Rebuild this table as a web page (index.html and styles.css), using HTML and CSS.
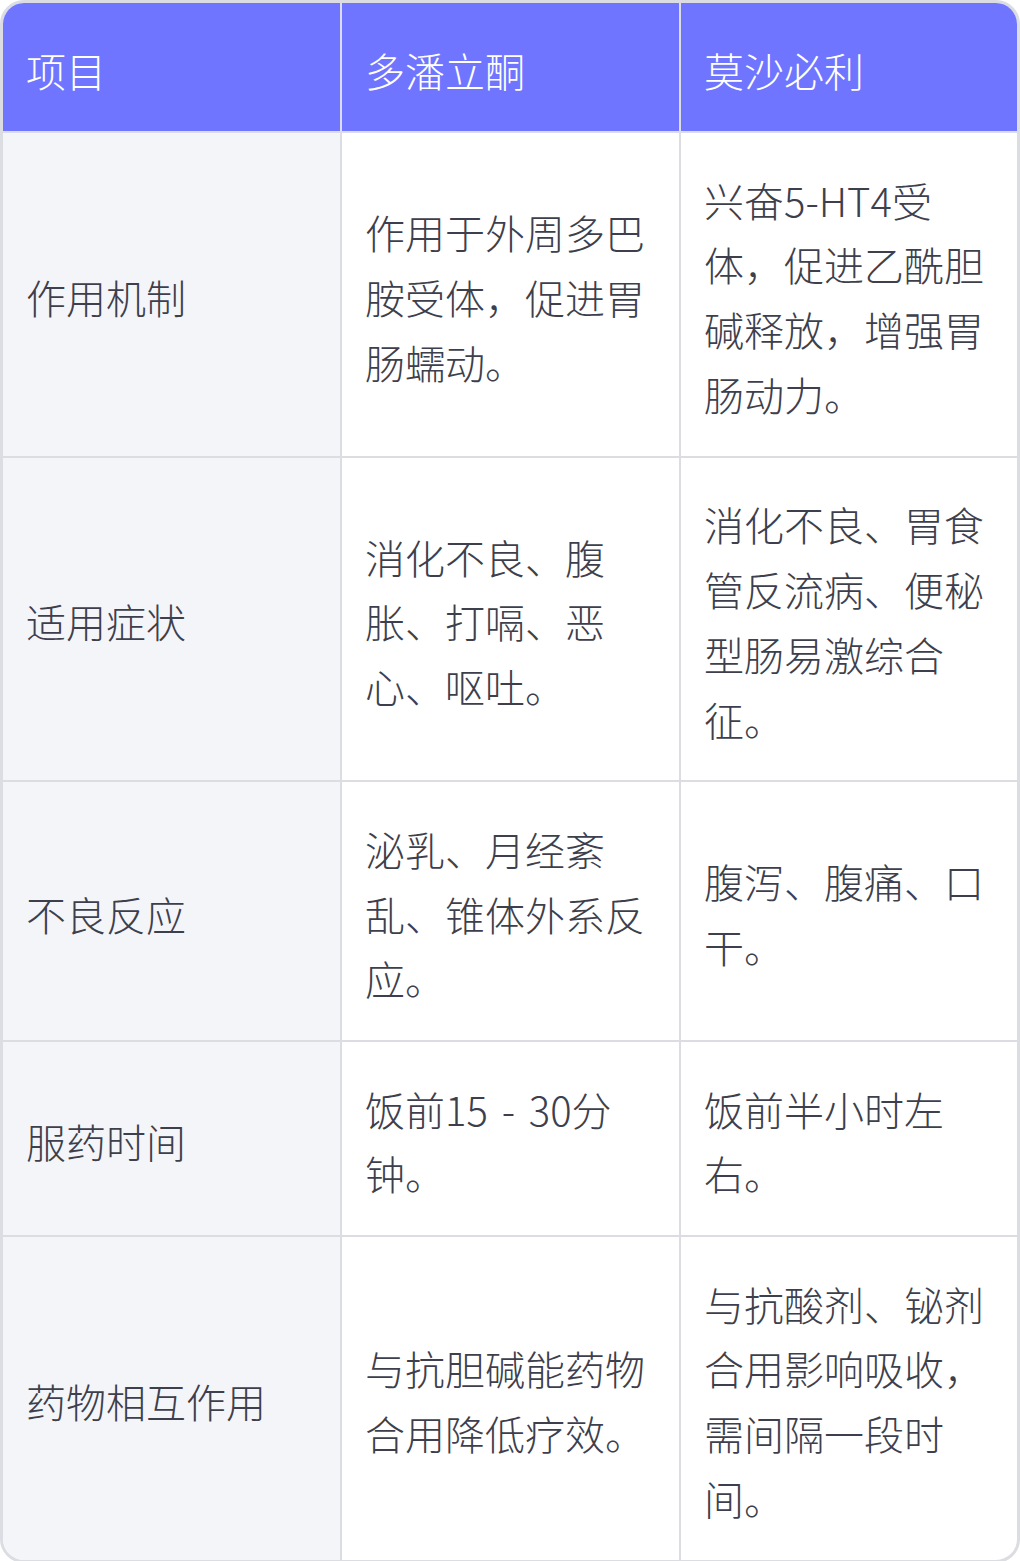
FILE: index.html
```html
<!DOCTYPE html>
<html lang="zh-CN">
<head>
<meta charset="utf-8">
<title>多潘立酮与莫沙必利对比</title>
<link rel="stylesheet" href="styles.css">
</head>
<body>
<div class="wrap">
  <table class="cmp">
    <colgroup>
      <col class="c1">
      <col class="c2">
      <col class="c3">
    </colgroup>
    <thead>
      <tr>
        <th>项目</th>
        <th>多潘立酮</th>
        <th>莫沙必利</th>
      </tr>
    </thead>
    <tbody>
      <tr>
        <td class="label">作用机制</td>
        <td>作用于外周多巴胺受体，促进胃肠蠕动。</td>
        <td>兴奋5-HT4受体，促进乙酰胆碱释放，增强胃肠动力。</td>
      </tr>
      <tr>
        <td class="label">适用症状</td>
        <td>消化不良、腹胀、打嗝、恶心、呕吐。</td>
        <td>消化不良、胃食管反流病、便秘型肠易激综合征。</td>
      </tr>
      <tr>
        <td class="label">不良反应</td>
        <td>泌乳、月经紊乱、锥体外系反应。</td>
        <td>腹泻、腹痛、口干。</td>
      </tr>
      <tr>
        <td class="label">服药时间</td>
        <td>饭前15 - 30分钟。</td>
        <td>饭前半小时左右。</td>
      </tr>
      <tr>
        <td class="label">药物相互作用</td>
        <td>与抗胆碱能药物合用降低疗效。</td>
        <td>与抗酸剂、铋剂合用影响吸收，需间隔一段时间。</td>
      </tr>
    </tbody>
  </table>
</div>
</body>
</html>
```
FILE: styles.css
```css
html, body {
  margin: 0;
  padding: 0;
  background: #ffffff;
}

.wrap {
  width: 1020px;
  box-sizing: border-box;
  border: 3px solid #dcdde2;
  border-radius: 24px;
  overflow: hidden;
  background: #ffffff;
}

.cmp {
  width: 100%;
  table-layout: fixed;
  border-collapse: separate;
  border-spacing: 0;
  font-family: "Noto Sans CJK SC", "Noto Sans", sans-serif;
  font-weight: 300;
  font-size: 40px;
  line-height: 64.8px;
  color: #3d404c;
}

.c1,
.c2 {
  width: 339px;
}

.cmp th,
.cmp td {
  padding: 34.5px 24px 28.9px 23px;
  text-align: left;
  vertical-align: middle;
  border-right: 2px solid #dcdde2;
  border-bottom: 2px solid #dcdde2;
  word-spacing: 5px;
  line-break: strict;
}

.cmp th:last-child,
.cmp td:last-child {
  border-right: none;
}

.cmp tbody tr:last-child td {
  border-bottom: none;
}

.cmp th {
  background: #7075ff;
  color: #ffffff;
  font-weight: 300;
}

.cmp td.label {
  background: #f4f5f9;
}
```
